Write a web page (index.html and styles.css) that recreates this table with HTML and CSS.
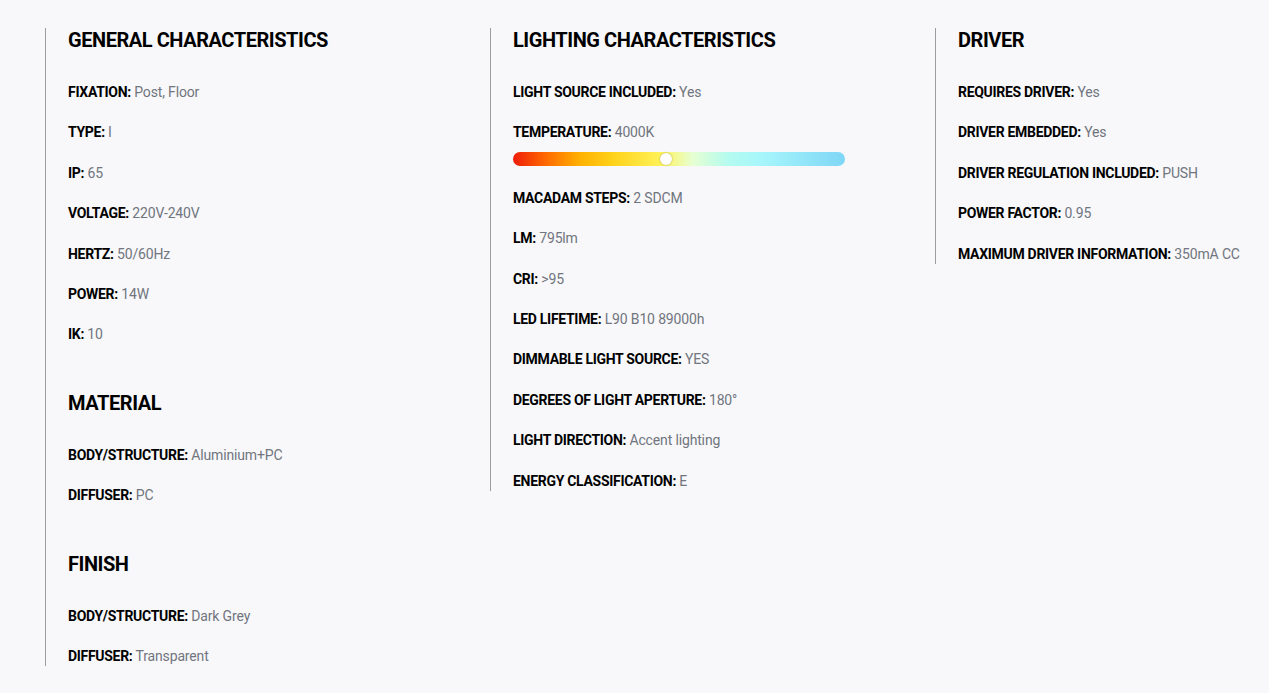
FILE: index.html
```html
<!DOCTYPE html>
<html lang="en">
<head>
<meta charset="utf-8">
<title>Specifications</title>
<link rel="stylesheet" href="styles.css">
</head>
<body>
<div class="specs">
  <div class="col">
    <section class="sec">
      <h2>GENERAL CHARACTERISTICS</h2>
      <p class="row"><b>FIXATION:</b> Post, Floor</p>
      <p class="row"><b>TYPE:</b> I</p>
      <p class="row"><b>IP:</b> 65</p>
      <p class="row"><b>VOLTAGE:</b> 220V-240V</p>
      <p class="row"><b>HERTZ:</b> 50/60Hz</p>
      <p class="row"><b>POWER:</b> 14W</p>
      <p class="row"><b>IK:</b> 10</p>
    </section>
    <section class="sec">
      <h2>MATERIAL</h2>
      <p class="row"><b>BODY/STRUCTURE:</b> Aluminium+PC</p>
      <p class="row"><b>DIFFUSER:</b> PC</p>
    </section>
    <section class="sec">
      <h2>FINISH</h2>
      <p class="row"><b>BODY/STRUCTURE:</b> Dark Grey</p>
      <p class="row"><b>DIFFUSER:</b> Transparent</p>
    </section>
  </div>
  <div class="col">
    <section class="sec">
      <h2>LIGHTING CHARACTERISTICS</h2>
      <p class="row"><b>LIGHT SOURCE INCLUDED:</b> Yes</p>
      <p class="row row-tight"><b>TEMPERATURE:</b> 4000K</p>
      <div class="temp-bar"><span class="knob" style="left: 46%"></span></div>
      <p class="row"><b>MACADAM STEPS:</b> 2 SDCM</p>
      <p class="row"><b>LM:</b> 795lm</p>
      <p class="row"><b>CRI:</b> &gt;95</p>
      <p class="row"><b>LED LIFETIME:</b> L90 B10 89000h</p>
      <p class="row"><b>DIMMABLE LIGHT SOURCE:</b> YES</p>
      <p class="row"><b>DEGREES OF LIGHT APERTURE:</b> 180°</p>
      <p class="row"><b>LIGHT DIRECTION:</b> Accent lighting</p>
      <p class="row"><b>ENERGY CLASSIFICATION:</b> E</p>
    </section>
  </div>
  <div class="col">
    <section class="sec">
      <h2>DRIVER</h2>
      <p class="row"><b>REQUIRES DRIVER:</b> Yes</p>
      <p class="row"><b>DRIVER EMBEDDED:</b> Yes</p>
      <p class="row"><b>DRIVER REGULATION INCLUDED:</b> PUSH</p>
      <p class="row"><b>POWER FACTOR:</b> 0.95</p>
      <p class="row"><b>MAXIMUM DRIVER INFORMATION:</b> 350mA CC</p>
    </section>
  </div>
</div>
</body>
</html>
```
FILE: styles.css
```css
html, body {
  margin: 0;
  padding: 0;
  background: #f8f8fa;
}
body {
  font-family: Roboto, "Liberation Sans", Arial, sans-serif;
  color: #000;
}
.specs {
  display: grid;
  grid-template-columns: 445px 445px 1fr;
  align-items: start;
  padding: 28px 0 0 45px;
}
.col {
  box-sizing: border-box;
  border-left: 1px solid #9c9c9c;
  padding-left: 22px;
}
.sec + .sec {
  margin-top: 46.5px;
}
h2 {
  margin: 0 0 30px;
  font-size: 20px;
  line-height: 24px;
  font-weight: 700;
  letter-spacing: -0.45px;
}
.row {
  margin: 0 0 20.4px;
  font-size: 14px;
  line-height: 20px;
  color: #70757e;
  letter-spacing: -0.15px;
  white-space: nowrap;
}
.row:last-child {
  margin-bottom: 0;
}
.row b {
  color: #000;
  font-weight: 700;
  letter-spacing: -0.3px;
}
.row-tight {
  margin-bottom: 10px;
}
.temp-bar {
  position: relative;
  width: 332px;
  height: 14px;
  border-radius: 7px;
  margin-bottom: 21.5px;
  background: linear-gradient(to right, #ee1c0a 0%, #ff6a00 10%, #ffb000 20%, #ffd21a 30%, #fff35c 45%, #e6ffd2 54%, #b4fbf0 65%, #a6f6fb 75%, #7fd6f6 100%);
}
.knob {
  position: absolute;
  top: 1px;
  width: 12px;
  height: 12px;
  margin-left: -6px;
  border-radius: 50%;
  background: #fff;
  box-shadow: 0 0 2px rgba(0, 0, 0, 0.35);
}
```
